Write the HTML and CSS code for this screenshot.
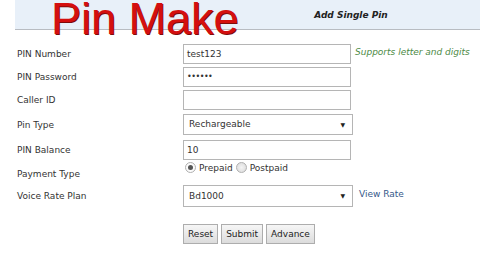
FILE: index.html
```html
<!DOCTYPE html>
<html>
<head>
<meta charset="utf-8">
<link rel="stylesheet" href="styles.css">
</head>
<body>
<div class="header">
  <div class="sub-title">Add Single Pin</div>
</div>
<div class="big-title">Pin Make</div>
<div class="form">
  <div class="row r1">
    <div class="label">PIN Number</div>
    <div class="field"><div class="input">test123</div><span class="hint">Supports letter and digits</span></div>
  </div>
  <div class="row r2">
    <div class="label">PIN Password</div>
    <div class="field"><div class="input dots">••••••</div></div>
  </div>
  <div class="row r3">
    <div class="label">Caller ID</div>
    <div class="field"><div class="input"></div></div>
  </div>
  <div class="row r4">
    <div class="label">Pin Type</div>
    <div class="field"><div class="select">Rechargeable<span class="arrow">▼</span></div></div>
  </div>
  <div class="row r5">
    <div class="label">PIN Balance</div>
    <div class="field"><div class="input">10</div></div>
  </div>
  <div class="row r6">
    <div class="label label-low">Payment Type</div>
    <div class="field radios">
      <span class="radio checked"></span><span class="rlabel">Prepaid</span>
      <span class="radio"></span><span class="rlabel">Postpaid</span>
    </div>
  </div>
  <div class="row r7">
    <div class="label">Voice Rate Plan</div>
    <div class="field"><div class="select tall">Bd1000<span class="arrow">▼</span></div><span class="link">View Rate</span></div>
  </div>
  <div class="row buttons">
    <div class="label"></div>
    <div class="field btns">
      <span class="btn">Reset</span>
      <span class="btn">Submit</span>
      <span class="btn">Advance</span>
    </div>
  </div>
</div>
</body>
</html>
```
FILE: styles.css
```css
html, body {
  margin: 0;
  padding: 0;
  background: #ffffff;
  width: 480px;
  height: 270px;
  overflow: hidden;
  font-family: "DejaVu Sans", Verdana, sans-serif;
  font-size: 9px;
  color: #333333;
}
body { position: relative; }
.header {
  margin-left: 15px;
  height: 29px;
  background: #e8f0f9;
  border-bottom: 1px solid #b8bcc2;
  display: flex;
  align-items: center;
  justify-content: flex-end;
}
.big-title {
  position: absolute;
  left: 51px;
  top: 0;
  font-family: "Liberation Sans", Arial, sans-serif;
  font-size: 45px;
  line-height: 38px;
  padding-bottom: 6px;
  color: #d40f0f;
  text-shadow: 1px 1px 0 #7e0b0b;
  white-space: nowrap;
}
.sub-title {
  width: 200px;
  margin-right: 29px;
  text-align: center;
  font-weight: bold;
  font-style: italic;
  font-size: 9px;
  color: #222;
}
.form {
  display: flex;
  flex-direction: column;
  padding-left: 17px;
}
.row {
  display: flex;
  align-items: center;
}
.label {
  width: 166px;
  flex: none;
}
.field {
  display: flex;
  align-items: center;
}
.r1 { margin-top: 14px; height: 20px; }
.r2 { margin-top: 3px; height: 20px; }
.r3 { margin-top: 3px; height: 20px; }
.r4 { margin-top: 4px; height: 21px; }
.r5 { margin-top: 5px; height: 20px; }
.r6 { margin-top: 1px; height: 20px; }
.r7 { margin-top: 4px; height: 22px; }
.buttons { margin-top: 17px; height: 20px; }
.input {
  box-sizing: border-box;
  width: 168px;
  height: 20px;
  border: 1px solid #b5b5b5;
  background: #fff;
  padding-left: 3px;
  line-height: 18px;
  color: #333;
}
.dots {
  font-size: 8px;
  letter-spacing: -0.5px;
}
.hint {
  margin-left: 4px;
  margin-top: -4px;
  font-style: italic;
  color: #4d8a46;
}
.select {
  box-sizing: border-box;
  width: 170px;
  height: 21px;
  border: 1px solid #b5b5b5;
  background: #fff;
  padding-left: 5px;
  padding-right: 7px;
  line-height: 19px;
  display: flex;
  justify-content: space-between;
}
.select.tall { height: 22px; line-height: 20px; }
.arrow { font-size: 6px; color: #222; }
.link {
  margin-left: 6px;
  margin-top: -4px;
  color: #36598a;
}
.label-low { padding-top: 6px; }
.radios { align-self: flex-start; padding-top: 1px; }
.radio {
  box-sizing: border-box;
  width: 11px;
  height: 11px;
  border-radius: 50%;
  border: 1px solid #b0b0b0;
  background: radial-gradient(circle, #f4f4f4 0%, #d8d8d8 100%);
  margin-left: 2px;
  margin-right: 3px;
  position: relative;
}
.radio.checked {
  background: #fbfbfb;
}
.radio.checked::after {
  content: "";
  position: absolute;
  left: 2px;
  top: 2px;
  width: 5px;
  height: 5px;
  border-radius: 50%;
  background: #555;
}
.rlabel { margin-right: 1px; }
.btns { gap: 3px; }
.btn {
  box-sizing: border-box;
  height: 20px;
  padding: 0 4px;
  line-height: 18px;
  border: 1px solid #adadad;
  background: linear-gradient(#f6f6f6, #dcdcdc);
  color: #222;
}
```
